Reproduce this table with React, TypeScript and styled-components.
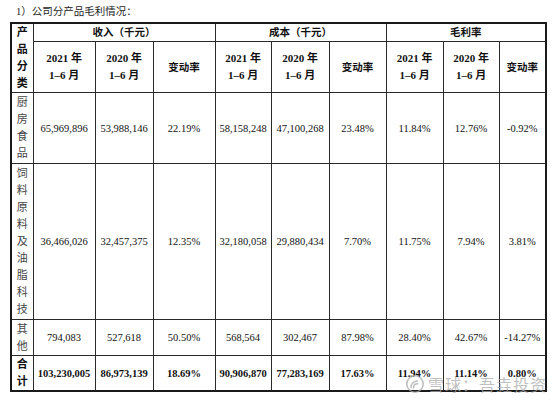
import React from "react";
import styled, { createGlobalStyle } from "styled-components";

const GlobalStyle = createGlobalStyle`
  html, body {
    margin: 0;
    padding: 0;
    background: #ffffff;
  }
  body {
    font-family: "Liberation Serif", "Noto Sans CJK SC", serif;
    color: #111;
  }
`;

const Page = styled.div`
  position: relative;
  width: 556px;
  height: 400px;
  padding: 4px 0 0 10px;
  box-sizing: border-box;
  overflow: hidden;
`;

const Title = styled.div`
  height: 18px;
  line-height: 16px;
  padding-left: 6px;
  font-size: 10.5px;
  color: #222;
`;

const Table = styled.table`
  width: 535px;
  border-collapse: collapse;
  table-layout: fixed;
  border: 2px solid #1a1a1a;
`;

const Cell = styled.td<{ $bold?: boolean }>`
  border: 1px solid #2a2a2a;
  padding: 0;
  text-align: center;
  vertical-align: middle;
  font-size: 10.5px;
  font-weight: ${(p) => (p.$bold ? 700 : 400)};
  line-height: 17px;
  white-space: nowrap;
`;

const HeadCell = styled(Cell)`
  font-weight: 700;
  font-size: 10.5px;
`;

const Stack = styled.div<{ $bold?: boolean }>`
  display: flex;
  flex-direction: column;
  align-items: center;
  font-size: 11px;
  line-height: 17px;
  font-weight: ${(p) => (p.$bold ? 700 : 400)};
  color: ${(p) => (p.$bold ? "#111" : "#444")};
`;

const Row = styled.tr<{ $h: number }>`
  height: ${(p) => p.$h}px;
`;

const Watermark = styled.div`
  position: absolute;
  left: 405px;
  top: 372px;
  display: flex;
  align-items: center;
  gap: 3px;
  font-family: "Noto Sans CJK SC", sans-serif;
  font-size: 16px;
  letter-spacing: 1px;
  color: rgba(170, 170, 170, 0.75);
  pointer-events: none;
`;

const widths = [22, 62, 58, 62, 56, 58, 57, 57, 56, 47];

type Line = { label: string; h: number; values: string[]; bold?: boolean };

const rows: Line[] = [
  {
    label: "厨房食品",
    h: 71,
    values: ["65,969,896", "53,988,146", "22.19%", "58,158,248", "47,100,268", "23.48%", "11.84%", "12.76%", "-0.92%"],
  },
  {
    label: "饲料原料及油脂科技",
    h: 156,
    values: ["36,466,026", "32,457,375", "12.35%", "32,180,058", "29,880,434", "7.70%", "11.75%", "7.94%", "3.81%"],
  },
  {
    label: "其他",
    h: 36,
    values: ["794,083", "527,618", "50.50%", "568,564", "302,467", "87.98%", "28.40%", "42.67%", "-14.27%"],
  },
  {
    label: "合计",
    h: 35,
    bold: true,
    values: ["103,230,005", "86,973,139", "18.69%", "90,906,870", "77,283,169", "17.63%", "11.94%", "11.14%", "0.80%"],
  },
];

const Period: React.FC<{ year: string }> = ({ year }) => (
  <Stack $bold>
    <span>{year} 年</span>
    <span>1–6 月</span>
  </Stack>
);

const groups = ["收入（千元）", "成本（千元）", "毛利率"];

export default function App() {
  return (
    <Page>
      <GlobalStyle />
      <Title>1）公司分产品毛利情况：</Title>
      <Table>
        <colgroup>
          {widths.map((w, i) => (
            <col key={i} style={{ width: w }} />
          ))}
        </colgroup>
        <tbody>
          <Row $h={17}>
            <HeadCell rowSpan={2}>
              <Stack $bold>
                {"产品分类".split("").map((c) => (
                  <span key={c}>{c}</span>
                ))}
              </Stack>
            </HeadCell>
            {groups.map((g) => (
              <HeadCell key={g} colSpan={3}>
                {g}
              </HeadCell>
            ))}
          </Row>
          <Row $h={51}>
            {groups.map((g) => (
              <React.Fragment key={g}>
                <HeadCell>
                  <Period year="2021" />
                </HeadCell>
                <HeadCell>
                  <Period year="2020" />
                </HeadCell>
                <HeadCell>变动率</HeadCell>
              </React.Fragment>
            ))}
          </Row>
          {rows.map((r) => (
            <Row key={r.label} $h={r.h}>
              <Cell>
                <Stack $bold={r.bold}>
                  {r.label.split("").map((c, i) => (
                    <span key={i}>{c}</span>
                  ))}
                </Stack>
              </Cell>
              {r.values.map((v, i) => (
                <Cell key={i} $bold={r.bold}>
                  {v}
                </Cell>
              ))}
            </Row>
          ))}
        </tbody>
      </Table>
      <Watermark>
        <svg width="20" height="20" viewBox="0 0 20 20" fill="none" stroke="currentColor" strokeWidth="1.6">
          <circle cx="10" cy="10" r="8.2" />
          <path d="M6 13.5c0-4 3-6.5 6.5-6.5M8.5 14c0-2.6 1.8-4.2 4.2-4.2" strokeLinecap="round" />
        </svg>
        <span>雪球：吾垚投资</span>
      </Watermark>
    </Page>
  );
}
